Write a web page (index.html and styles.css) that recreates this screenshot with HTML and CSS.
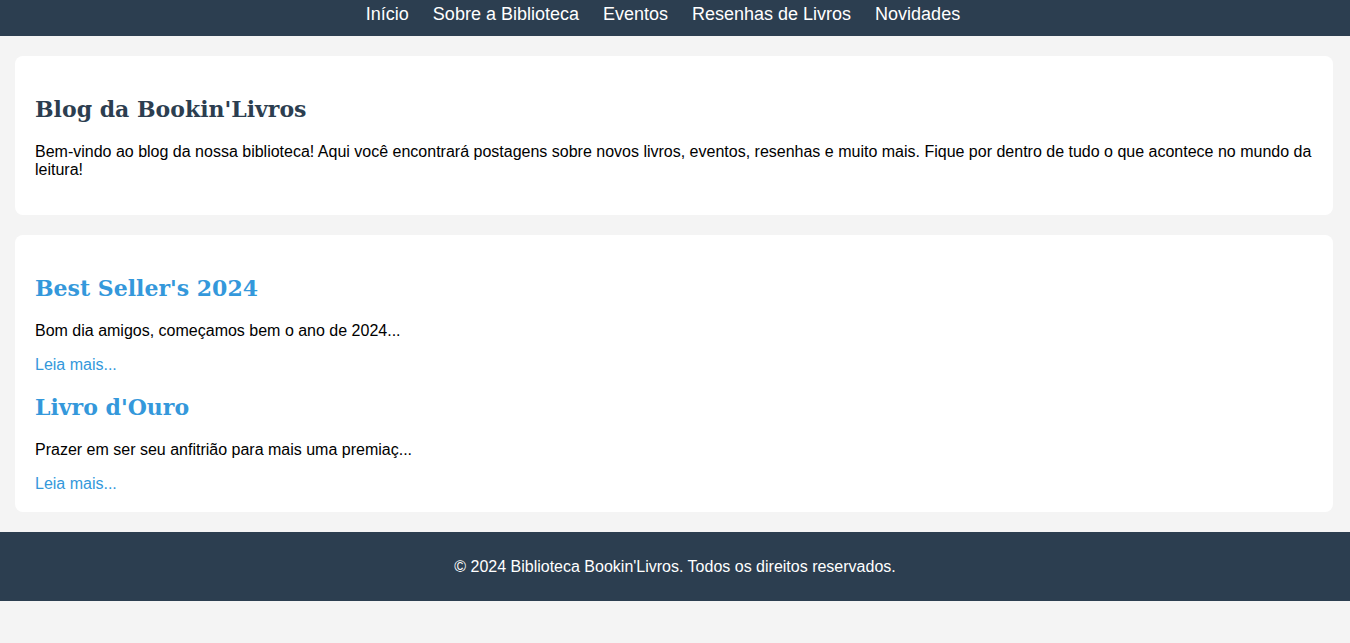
FILE: index.html
```html
<!DOCTYPE html>
<html lang="pt-BR">
<head>
<meta charset="utf-8">
<title>Blog da Bookin'Livros</title>
<link rel="stylesheet" href="styles.css">
</head>
<body>
<header class="site-header">
  <nav class="nav">
    <a href="#" class="nav-link">Início</a>
    <a href="#" class="nav-link">Sobre a Biblioteca</a>
    <a href="#" class="nav-link">Eventos</a>
    <a href="#" class="nav-link">Resenhas de Livros</a>
    <a href="#" class="nav-link">Novidades</a>
  </nav>
</header>
<main class="main">
  <section class="card">
    <h2 class="title">Blog da Bookin'Livros</h2>
    <p class="text">Bem-vindo ao blog da nossa biblioteca! Aqui você encontrará postagens sobre novos livros, eventos, resenhas e muito mais. Fique por dentro de tudo o que acontece no mundo da leitura!</p>
  </section>
  <section class="card">
    <article class="post">
      <h2 class="post-title">Best Seller's 2024</h2>
      <p class="text">Bom dia amigos, começamos bem o ano de 2024...</p>
      <a href="#" class="more">Leia mais...</a>
    </article>
    <article class="post">
      <h2 class="post-title">Livro d'Ouro</h2>
      <p class="text">Prazer em ser seu anfitrião para mais uma premiaç...</p>
      <a href="#" class="more">Leia mais...</a>
    </article>
  </section>
</main>
<footer class="site-footer">
  <p class="footer-text">© 2024 Biblioteca Bookin'Livros. Todos os direitos reservados.</p>
</footer>
</body>
</html>
```
FILE: styles.css
```css
html, body {
  margin: 0;
  padding: 0;
}
body {
  background: #f4f4f4;
  font-family: "Liberation Sans", Arial, sans-serif;
  font-size: 16px;
  color: #000;
}
.site-header {
  background: #2c3e50;
  padding: 4px 0 11px;
}
.nav {
  display: flex;
  justify-content: center;
}
.nav-link {
  color: #fff;
  text-decoration: none;
  font-size: 18px;
  margin-right: 24px;
}
.main {
  padding: 20px 17px 20px 15px;
  display: flex;
  flex-direction: column;
  gap: 20px;
}
.card {
  background: #fff;
  border-radius: 8px;
  padding: 20px;
}
.title, .post-title {
  font-family: "DejaVu Serif", Georgia, serif;
  font-weight: bold;
  font-size: 22px;
  line-height: 27px;
  margin: 20px 0;
}
.title {
  color: #2c3e50;
}
.post-title {
  color: #3498db;
}
.text {
  margin: 16px 0;
  line-height: 18px;
}
.card > .text:last-child {
  margin-bottom: 16px;
}
.more {
  display: block;
  color: #3498db;
  text-decoration: none;
  line-height: 18px;
}
.post:last-child .more {
  line-height: 17px;
}
.site-footer {
  background: #2c3e50;
  color: #fff;
  text-align: center;
  padding: 10px 0 9px;
}
.footer-text {
  margin: 16px 0;
  line-height: 18px;
}
```
